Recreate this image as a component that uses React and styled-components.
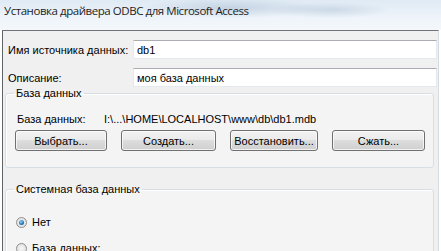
import React from "react"
import styled, { createGlobalStyle } from "styled-components"

const Global = createGlobalStyle`
  html, body {
    margin: 0;
    padding: 0;
    background: #ffffff;
  }
  body {
    font-family: "Liberation Sans", Arial, sans-serif;
    font-size: 11px;
    color: #000;
  }
`

const Page = styled.div`
  width: 441px;
  height: 251px;
  overflow: hidden;
  display: flex;
  flex-direction: column;
`

const TitleBar = styled.div`
  height: 30px;
  flex-shrink: 0;
  display: flex;
  align-items: flex-start;
  padding: 3px 0 0 4px;
  box-sizing: border-box;
  background:
    radial-gradient(ellipse 90px 10px at 230px 8px, rgba(120, 150, 180, 0.3), transparent),
    radial-gradient(ellipse 60px 8px at 330px 10px, rgba(120, 150, 180, 0.25), transparent),
    linear-gradient(to bottom, #dfeaf4 0%, #eef4fa 60%, #f4f8fb 100%);
`

const Title = styled.span`
  font-family: "Open Sans", "Noto Sans", sans-serif;
  font-size: 11.5px;
  letter-spacing: -0.45px;
  color: #1e1e1e;
`

const Window = styled.div`
  flex: 1;
  margin-left: 2px;
  width: 437px;
  border-top: 1px solid #6d7378;
  border-left: 1px solid #5f6468;
  border-right: 1px solid #d6dbe0;
  background: #f0f0f0;
  box-sizing: border-box;
  padding: 9px 0 0 2px;
  display: flex;
  flex-direction: column;
`

const Row = styled.div`
  display: flex;
  align-items: center;
  height: 19px;
  margin: 0 0 ${p => p.$gap || 0}px 3px;
`

const Label = styled.div`
  width: 125px;
  flex-shrink: 0;
  white-space: nowrap;
`

const Input = styled.div`
  flex: 1;
  height: 19px;
  box-sizing: border-box;
  margin-right: 1px;
  border: 1px solid #e3e9ef;
  border-top-color: #abadb3;
  background: #fff;
  padding: 0 3px;
  display: flex;
  align-items: center;
`

const Group = styled.fieldset`
  margin: ${p => p.$top}px 4px 0 0;
  padding: 0 0 0 9px;
  height: ${p => p.$height}px;
  box-sizing: border-box;
  border: 1px solid #d5dfe5;
  border-radius: 3px;
  background: #f4f4f4;
  box-shadow: inset 1px 1px 0 #fff;
  min-width: 0;
`

const Legend = styled.legend`
  padding: 0 2px;
  margin-left: -1px;
  line-height: 14px;
`

const InfoRow = styled.div`
  display: flex;
  margin-top: 12px;
  height: 14px;
  align-items: center;
  padding-left: 2px;
`

const InfoLabel = styled.span`
  width: 87px;
`

const Buttons = styled.div`
  display: flex;
  margin-top: 4px;
  gap: 14px;
`

const Button = styled.div`
  width: ${p => p.$w}px;
  height: 21px;
  box-sizing: border-box;
  border: 1px solid #707070;
  border-radius: 3px;
  background: linear-gradient(to bottom, #f2f2f2 0%, #ebebeb 45%, #dddddd 50%, #cfcfcf 100%);
  box-shadow: inset 0 0 0 1px rgba(255, 255, 255, 0.7);
  display: flex;
  align-items: center;
  justify-content: center;
  color: #000;
`

const RadioRow = styled.label`
  display: flex;
  align-items: center;
  gap: 5px;
  margin-left: 1px;
  margin-top: ${p => p.$top}px;
  height: 14px;
`

const RadioDot = styled.span`
  width: 11px;
  height: 11px;
  border-radius: 50%;
  box-sizing: border-box;
  border: 1px solid #8e8f8f;
  background: radial-gradient(circle at 50% 50%, #f8f8f8 0%, #d8d8d8 100%);
  display: flex;
  align-items: center;
  justify-content: center;

  &::after {
    content: "";
    display: ${p => (p.$on ? "block" : "none")};
    width: 5px;
    height: 5px;
    border-radius: 50%;
    background: radial-gradient(circle at 40% 35%, #8fd4f5 0%, #1f74b8 60%, #0d3f72 100%);
  }
`

export default function App() {
  return (
    <Page>
      <Global />
      <TitleBar>
        <Title>Установка драйвера ODBC для Microsoft Access</Title>
      </TitleBar>
      <Window>
        <Row $gap={9}>
          <Label>Имя источника данных:</Label>
          <Input>db1</Input>
        </Row>
        <Row>
          <Label>Описание:</Label>
          <Input>моя база данных</Input>
        </Row>
        <Group $top={-1} $height={82}>
          <Legend>База данных</Legend>
          <InfoRow>
            <InfoLabel>База данных:</InfoLabel>
            <span>I:\...\HOME\LOCALHOST\www\db\db1.mdb</span>
          </InfoRow>
          <Buttons>
            <Button $w={92}>Выбрать...</Button>
            <Button $w={95}>Создать...</Button>
            <Button $w={88}>Восстановить...</Button>
            <Button $w={93}>Сжать...</Button>
          </Buttons>
        </Group>
        <Group $top={14} $height={90}>
          <Legend>Системная база данных</Legend>
          <RadioRow $top={19}>
            <RadioDot $on />
            Нет
          </RadioRow>
          <RadioRow $top={12}>
            <RadioDot />
            База данных:
          </RadioRow>
        </Group>
      </Window>
    </Page>
  )
}
